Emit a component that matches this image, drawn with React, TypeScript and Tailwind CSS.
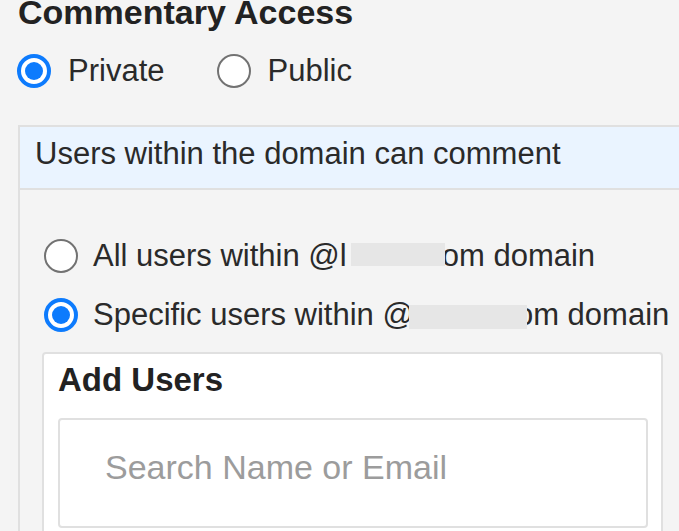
function Radio({ checked }: { checked?: boolean }) {
  if (checked) {
    return (
      <span className="flex h-[34px] w-[34px] shrink-0 items-center justify-center rounded-full border-[4px] border-[#0d7bfd] bg-white">
        <span className="h-[18px] w-[18px] rounded-full bg-[#0d7bfd]" />
      </span>
    );
  }
  return <span className="h-[34px] w-[34px] shrink-0 rounded-full border-[2.5px] border-[#727272] bg-white" />;
}

export default function App() {
  return (
    <div
      className="h-[531px] w-[679px] overflow-hidden bg-[#f4f4f4] text-[#2a2a2a]"
      style={{ fontFamily: '"Liberation Sans", Arial, sans-serif' }}
    >
      <h2 className="ml-[18px] mt-[-4px] text-[34px] font-bold leading-[33px] text-[#222]">Commentary Access</h2>

      {/* visibility choice */}
      <div className="ml-[17px] mt-[25px] flex h-[34px] items-center gap-[53px] text-[31px] leading-[34px]">
        <label className="flex items-center gap-[17px]">
          <Radio checked />
          <span>Private</span>
        </label>
        <label className="flex items-center gap-[16px]">
          <Radio />
          <span>Public</span>
        </label>
      </div>

      <div className="ml-[18px] mt-[37px] w-[700px] border-l-2 border-t-2 border-[#e0e0e0]">
        <div className="h-[63px] border-b-2 border-[#e0e0e0] bg-[#eaf4ff] pl-[15px] pt-[10px] text-[31px] leading-[34px]">
          Users within the domain can comment
        </div>

        <div className="pl-[24px] pt-[49px] text-[31px] leading-[34px]">
          <label className="flex h-[34px] items-center gap-[15px] whitespace-nowrap">
            <Radio />
            <span>
              All users within @l
              <span className="relative ml-[4px] mr-[-3px] inline-block h-[23px] w-[94px] bg-[#e6e6e6]" />
              om domain
            </span>
          </label>
          <label className="mt-[25px] flex h-[34px] items-center gap-[15px] whitespace-nowrap">
            <Radio checked />
            <span>
              Specific users within @
              <span className="relative ml-[-5px] mr-[-11px] inline-block h-[24px] w-[118px] bg-[#e6e6e6] align-[-4px]" />
              om domain
            </span>
          </label>
        </div>

        {/* add users panel */}
        <div className="ml-[22px] mt-[20px] h-[200px] w-[621px] rounded-[4px] border-2 border-[#e0e0e0] bg-white pl-[14px] pt-[9px]">
          <h3 className="text-[33px] font-bold leading-[33px] text-[#222]">Add Users</h3>
          <input
            type="text"
            placeholder="Search Name or Email"
            className="mt-[22px] h-[110px] w-[590px] rounded-[4px] border-2 border-[#e0e0e0] bg-white pb-[12px] pl-[45px] text-[34px] outline-none placeholder:text-[#9c9c9c]"
          />
        </div>
      </div>
    </div>
  );
}
